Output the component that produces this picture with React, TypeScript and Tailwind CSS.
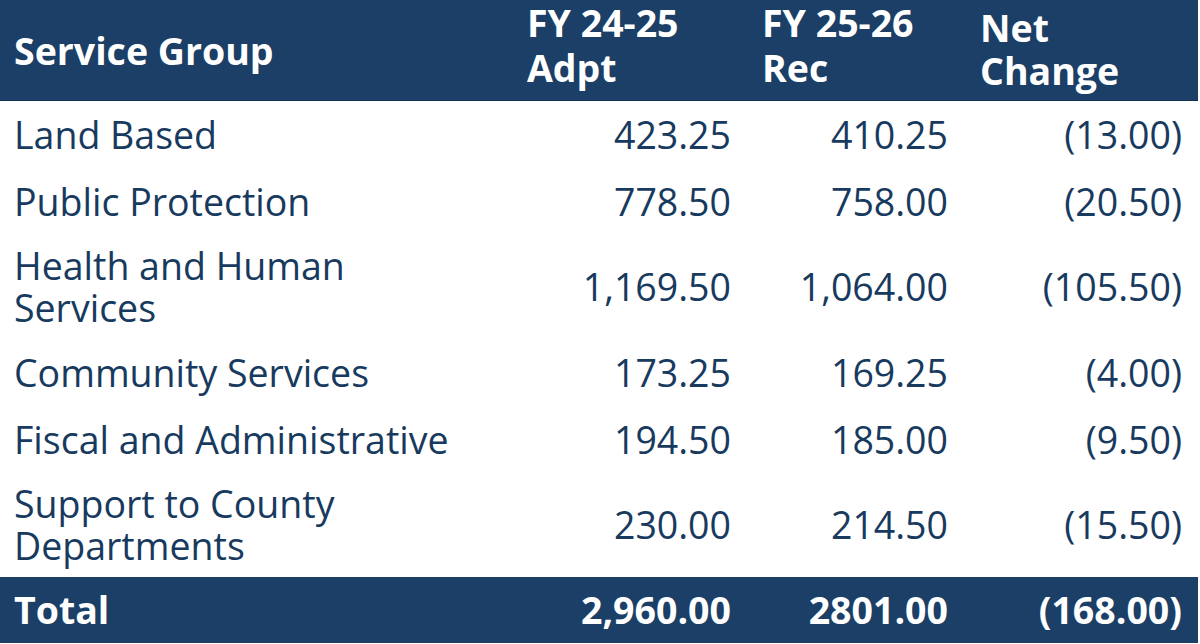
const rows = [
  { group: "Land Based", adpt: "423.25", rec: "410.25", net: "(13.00)" },
  { group: "Public Protection", adpt: "778.50", rec: "758.00", net: "(20.50)" },
  { group: "Health and Human Services", adpt: "1,169.50", rec: "1,064.00", net: "(105.50)" },
  { group: "Community Services", adpt: "173.25", rec: "169.25", net: "(4.00)" },
  { group: "Fiscal and Administrative", adpt: "194.50", rec: "185.00", net: "(9.50)" },
  { group: "Support to County Departments", adpt: "230.00", rec: "214.50", net: "(15.50)" },
];

const cols = "grid grid-cols-[513px_234px_217px_234px]";

export default function App() {
  return (
    <div className="w-[1198px] bg-white font-['Open_Sans',sans-serif] text-[#173a5e]">
      <div className={`${cols} h-[101px] bg-[#1b3f66] text-white font-bold text-[37.5px] leading-[45px] border-b border-[#163355]`}>
        <div className="pl-[14px] self-center">Service Group</div>
        <div className="pl-[14px]">FY 24-25<br />Adpt</div>
        <div className="pl-[15px]">FY 25-26<br />Rec</div>
        <div className="pl-[16px] pt-[6px] leading-[43px]">Net<br />Change</div>
      </div>

      {rows.map((r) => (
        <div key={r.group} className={`${cols} items-center min-h-[67px] text-[37.5px] leading-[42px]`}>
          <div className="pl-[14px] pr-[40px] py-[10px]">{r.group}</div>
          <div className="pr-[16px] text-right">{r.adpt}</div>
          <div className="pr-[16px] text-right">{r.rec}</div>
          <div className="pr-[16px] text-right">{r.net}</div>
        </div>
      ))}

      <div className={`${cols} items-center h-[66px] bg-[#1b3f66] text-white font-bold text-[37.5px]`}>
        <div className="pl-[14px]">Total</div>
        <div className="pr-[16px] text-right">2,960.00</div>
        <div className="pr-[16px] text-right">2801.00</div>
        <div className="pr-[16px] text-right">(168.00)</div>
      </div>
    </div>
  );
}
